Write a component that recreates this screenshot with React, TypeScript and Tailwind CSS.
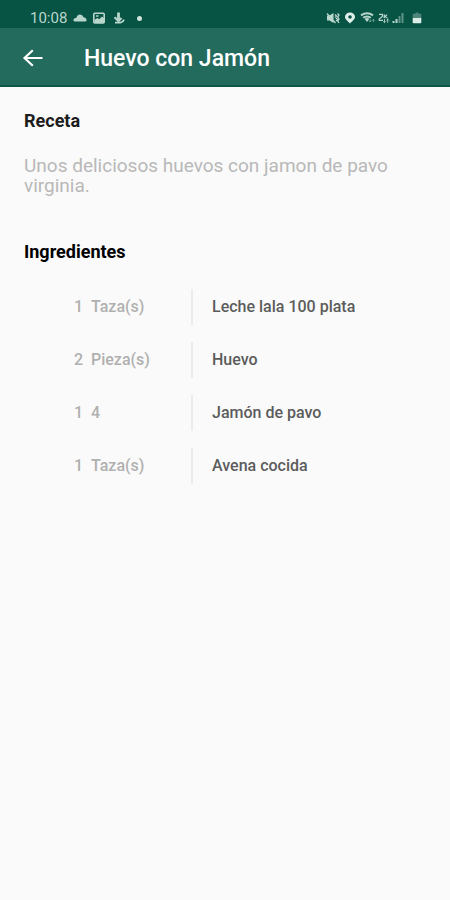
interface Ingredient {
  quantity: string;
  unit: string;
  name: string;
}

const ingredients: Ingredient[] = [
  { quantity: "1", unit: "Taza(s)", name: "Leche lala 100 plata" },
  { quantity: "2", unit: "Pieza(s)", name: "Huevo" },
  { quantity: "1", unit: "4", name: "Jamón de pavo" },
  { quantity: "1", unit: "Taza(s)", name: "Avena cocida" },
];

function StatusBar() {
  return (
    <div className="flex h-7 items-center justify-between bg-[#075344] pt-2 pr-7 pl-[30px] text-[#b9d6cd]">
      <div className="flex items-center">
        <span className="text-[15px] leading-5">10:08</span>
        {/* cloud */}
        <svg className="ml-1.5 h-2 w-3.5" viewBox="0 0 14 8" fill="currentColor" aria-hidden="true">
          <path d="M1.5 7.5Q0 7 .5 5.5 1.4 3.8 3.4 3.8 4.5.6 7 .6q2.4 0 3.6 2.7 2.7.2 3 2.6.1 1.6-1.4 1.6z" />
        </svg>
        {/* picture */}
        <svg className="ml-1.5 h-3 w-3" viewBox="0 0 12 12" fill="none" aria-hidden="true">
          <rect x=".8" y="1.3" width="10.4" height="9.6" rx="1" stroke="currentColor" strokeWidth="1.6" />
          <path d="M1.5 10.5V7.8L4.4 6l1.8 1.2L9 4.6l2 1.6v4.3z" fill="currentColor" />
          <path d="M3 4h2.6" stroke="currentColor" strokeWidth="1.4" />
        </svg>
        {/* download */}
        <svg className="ml-2 h-3 w-3" viewBox="0 0 12 12" fill="none" stroke="currentColor" aria-hidden="true">
          <path d="M5.5.5v7" strokeWidth="2.8" />
          <path d="M1.5 5.2 5.5 9l3-3" strokeWidth="2.2" />
          <path d="M2 10.6h5.5q2.5-.4 3.5-3" strokeWidth="1.8" />
        </svg>
        <span className="ml-3 size-[5px] rounded-full bg-[#cfe4dd]" />
      </div>

      <div className="flex items-center">
        {/* muted speaker */}
        <svg className="h-3 w-3.5" viewBox="0 0 14 12" aria-hidden="true">
          <path d="M1 3.5h2.5L7.5 1v10L3.5 8.5H1z" fill="currentColor" />
          <path d="M1 1.5 9.5 11M9 2.5l1.5 1.5L9 5.5M10 6l1.5 1.5L10 9M11.5 1.5 13 3l-1.3 2L13 7l-1.3 2L13 10.8" fill="none" stroke="currentColor" strokeWidth="1.3" />
        </svg>
        {/* location */}
        <svg className="ml-1 h-3 w-3 text-[#e0f0ea]" viewBox="0 0 12 12" fill="currentColor" aria-hidden="true">
          <path fillRule="evenodd" d="M6 .4A5 4.6 0 0 0 1 5C1 7.4 4.2 9.4 6 11.6 7.8 9.4 11 7.4 11 5A5 4.6 0 0 0 6 .4Zm0 2.8a1.8 1.8 0 1 1 0 3.6 1.8 1.8 0 0 1 0-3.6Z" />
        </svg>
        {/* wifi */}
        <svg className="ml-1 h-3 w-4" viewBox="0 0 16 12" fill="none" stroke="currentColor" aria-hidden="true">
          <path d="M1 3.4q6-4.2 12 0M3.2 5.8q3.8-2.8 7.6 0" strokeWidth="2" />
          <path d="M4.6 6.8 7 10l2.4-3.2Q7 5.4 4.6 6.8Z" fill="currentColor" stroke="none" />
          <path d="M10.2 9.8V7.5M9 8.7l1.2 1.3 1.2-1.3M13.4 10V7.4M12.2 8.6l1.2-1.2 1.2 1.2" strokeWidth=".8" opacity=".7" />
        </svg>
        {/* roaming data */}
        <svg className="ml-0.5 h-3 w-3" viewBox="0 0 12 12" fill="none" stroke="currentColor" aria-hidden="true">
          <path d="M1 2.4h3.4v2L1.2 7v1.4H5M6.2 2.2v4M6.2 5l3-2.4M7.2 4.4l2.4 2" strokeWidth="1.2" />
          <path d="M6.5 7v3.5M5.2 9.4l1.3 1.3 1.3-1.3M9.7 10.8V7.2M8.5 8.4l1.2-1.2 1.2 1.2" strokeWidth=".9" />
        </svg>
        {/* signal */}
        <svg className="ml-0.5 h-3 w-3" viewBox="0 0 12 12" fill="currentColor" aria-hidden="true">
          <path d="M.5 9h2v2h-2zM3.5 7h2v4h-2z" />
          <path d="M6.5 4h2v7h-2zM9.5 1h2v10h-2z" opacity=".5" />
        </svg>
        {/* battery */}
        <svg className="ml-2 h-3 w-2.5" viewBox="0 0 10 12" fill="currentColor" aria-hidden="true">
          <path d="M3.5.5h3v1.3h2q.8 0 .8.8V6H.7V2.6q0-.8.8-.8h2z" opacity=".4" />
          <path d="M.7 6h8.6v4.5q0 .8-.8.8h-7q-.8 0-.8-.8z" className="text-[#dcece6]" />
        </svg>
      </div>
    </div>
  );
}

export default function App() {
  return (
    <div className="min-h-screen bg-[#fafafa] font-[Roboto,sans-serif]">
      <StatusBar />

      <header className="flex h-[59px] items-center border-b-2 border-[#0c5848] bg-[#226b5d] px-5 pt-1 text-white">
        <button type="button" aria-label="Volver" className="flex size-6 items-center justify-center">
          <svg className="h-5 w-6" viewBox="0 0 24 20" fill="none" stroke="currentColor" strokeWidth="2.2" aria-hidden="true">
            <path d="M22.5 9H4.5M12.8 1.2 4.5 9l8.3 7.8" />
          </svg>
        </button>
        <h1 className="ml-10 text-[23px] leading-7 font-medium">Huevo con Jamón</h1>
      </header>

      <main className="px-6 pt-6">
        <section>
          <h2 className="text-lg leading-5 font-bold text-[#1c1c1c]">Receta</h2>
          <p className="mt-[25px] text-[19px] leading-5 text-[#b8b8b8]">
            Unos deliciosos huevos con jamon de pavo virginia.
          </p>
        </section>

        <section className="mt-[46px]">
          <h2 className="text-lg leading-5 font-bold text-black">Ingredientes</h2>
          <table className="mt-[18px] w-full text-left text-base leading-5">
            <tbody>
              {ingredients.map((item, index) => (
                <tr key={index} className="h-[53px]">
                  <td className="w-[59px] pr-0 text-right font-medium text-[#b0b0b0]">
                    {item.quantity}
                  </td>
                  <td className="w-[108px] pl-2 font-medium text-[#b0b0b0]">{item.unit}</td>
                  <th scope="row" className="p-0 font-medium text-[#5c5c5c]">
                    <div className="flex h-9 items-center border-l-2 border-[#ebebeb] pl-[19px]">
                      {item.name}
                    </div>
                  </th>
                </tr>
              ))}
            </tbody>
          </table>
        </section>
      </main>
    </div>
  );
}
